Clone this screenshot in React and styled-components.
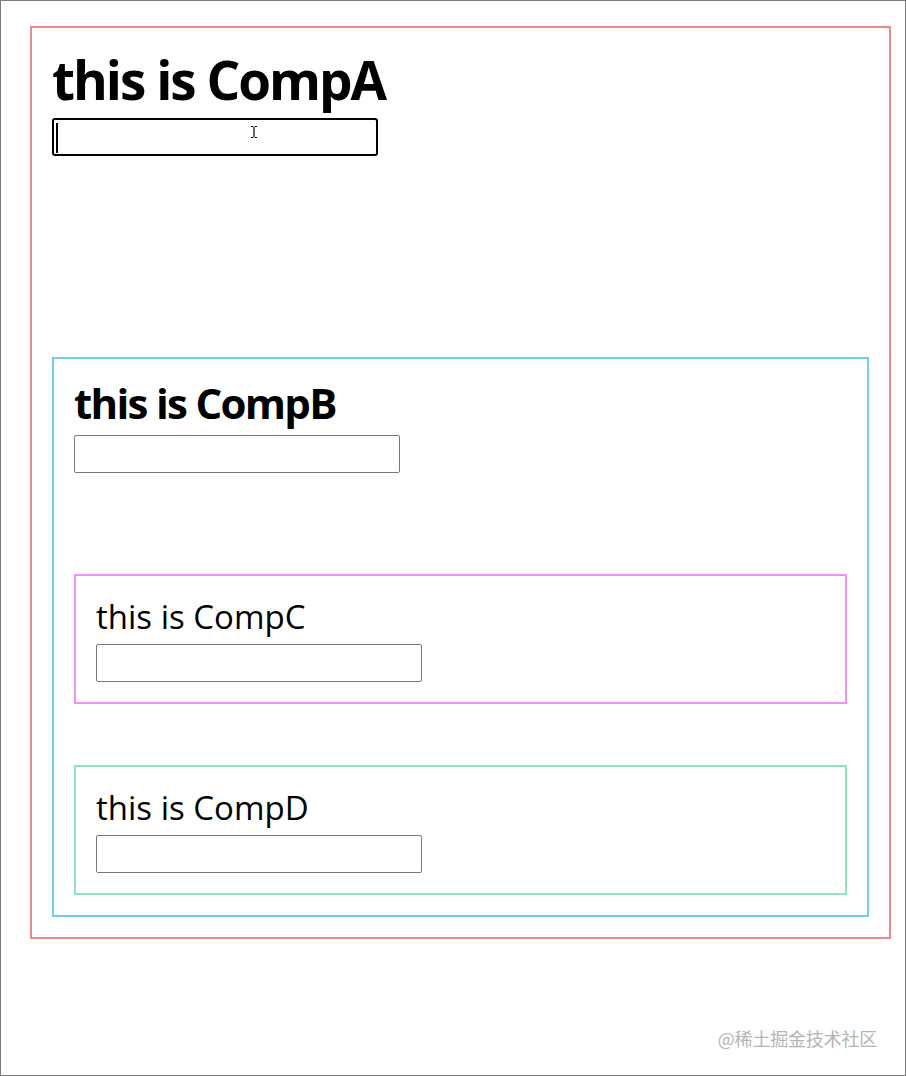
import React from 'react';
import styled, { createGlobalStyle } from 'styled-components';

const GlobalStyle = createGlobalStyle`
  html, body {
    margin: 0;
    padding: 0;
    background: #fff;
  }

  body {
    font-family: "Open Sans", "Noto Sans", Arial, sans-serif;
    color: #000;
  }

  * {
    box-sizing: border-box;
  }
`;

const Frame = styled.div`
  position: relative;
  height: 1076px;
  border: 1px solid #7a7a7a;
  padding: 25px 14px 0 29px;
`;

const Panel = styled.div`
  border: 2px solid ${({ color }) => color};
  padding: 20px;
  margin-top: ${({ gap }) => gap || 0}px;
`;

const Title = styled.div`
  font-size: ${({ size }) => size}px;
  font-weight: ${({ bold }) => (bold ? 700 : 400)};
  line-height: ${({ lineHeight }) => lineHeight}px;
  margin-bottom: ${({ after }) => after}px;
  letter-spacing: ${({ spacing }) => spacing || 0}px;
  white-space: nowrap;
`;

const InputWrap = styled.div`
  position: relative;
  width: 326px;
  height: 38px;
`;

const TextInput = styled.input`
  display: block;
  width: 326px;
  height: 38px;
  margin: 0;
  padding: 0 4px;
  font: inherit;
  font-size: 24px;
  background: #fff;
  border: ${({ focused }) => (focused ? '2px solid #000' : '1px solid #767676')};
  border-radius: ${({ focused }) => (focused ? '3px' : '2px')};
  outline: none;
`;

const Caret = styled.span`
  position: absolute;
  left: 4px;
  top: 5px;
  width: 2px;
  height: 30px;
  background: #000;
`;

const Pointer = styled.svg`
  position: absolute;
  left: 198px;
  top: 8px;
  pointer-events: none;
`;

const Watermark = styled.div`
  position: absolute;
  right: 28px;
  bottom: 25px;
  font-family: "Noto Sans CJK SC", "Noto Sans", sans-serif;
  font-size: 18px;
  line-height: 24px;
  color: #b4b4b4;
  letter-spacing: -0.2px;
`;

const IBeam = () => (
  <Pointer width="8" height="12" viewBox="0 0 8 12">
    <path d="M1 0.5h2.3M4.7 0.5H7M1 11.5h2.3M4.7 11.5H7" stroke="#000" strokeWidth="1" fill="none" />
    <path d="M4 1v10" stroke="#000" strokeWidth="1.2" fill="none" />
  </Pointer>
);

const Field = ({ focused }) => (
  <InputWrap>
    <TextInput type="text" focused={focused ? 1 : 0} readOnly />
    {focused && <Caret />}
    {focused && <IBeam />}
  </InputWrap>
);

const CompD = () => (
  <Panel color="#8fe4b9" gap={61}>
    <Title size={33} lineHeight={42} after={6}>
      this is CompD
    </Title>
    <Field />
  </Panel>
);

const CompC = () => (
  <Panel color="#ee94ee" gap={101}>
    <Title size={33} lineHeight={42} after={6}>
      this is CompC
    </Title>
    <Field />
  </Panel>
);

const CompB = () => (
  <Panel color="#70d0e6" gap={201}>
    <Title size={42} bold lineHeight={48} after={8} spacing={-1.7}>
      this is CompB
    </Title>
    <Field />
    <CompC />
    <CompD />
  </Panel>
);

const CompA = () => (
  <Panel color="#e88a90">
    <Title size={53} bold lineHeight={63} after={7} spacing={-2}>
      this is CompA
    </Title>
    <Field focused />
    <CompB />
  </Panel>
);

const App = () => (
  <>
    <GlobalStyle />
    <Frame>
      <CompA />
      <Watermark>@稀土掘金技术社区</Watermark>
    </Frame>
  </>
);

export default App;
